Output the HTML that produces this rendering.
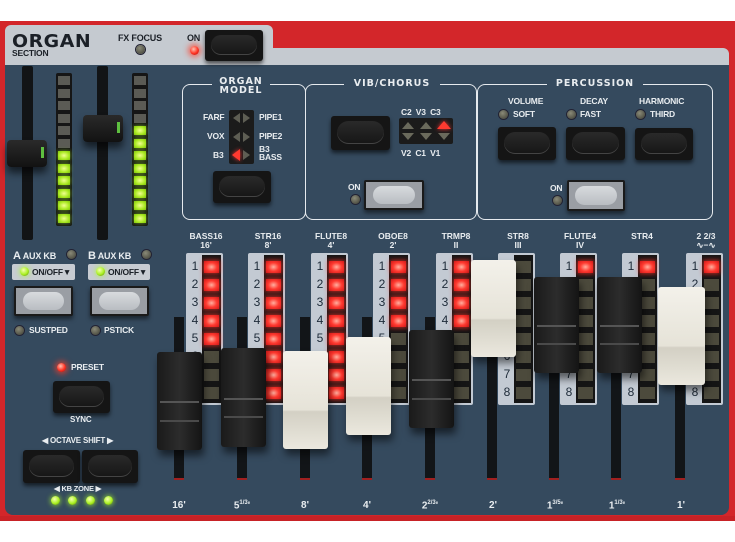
<!DOCTYPE html>
<html><head><meta charset="utf-8"><style>
*{margin:0;padding:0;box-sizing:border-box}
body{width:735px;height:542px;background:#fff;position:relative;overflow:hidden;font-family:"Liberation Sans",sans-serif;font-weight:bold;color:#e9edf0}
.a{position:absolute}
.t{position:absolute;font-size:8.5px;white-space:nowrap;letter-spacing:-0.2px}
.led{position:absolute;width:9px;height:9px;border-radius:50%;background:radial-gradient(circle at 40% 35%,#8a8a78,#3a3a30);box-shadow:0 0 0 1px #223}
.red{background:radial-gradient(circle at 40% 35%,#ffc0b0,#ff3020 55%,#a01010);box-shadow:0 0 6px 2px rgba(255,60,40,.7)}
.grn{background:radial-gradient(circle at 40% 35%,#f4ffb0,#a8f020 55%,#507010);box-shadow:0 0 5px 1px rgba(170,255,40,.6)}
.bb{position:absolute;background:#151515;border-radius:3px;box-shadow:0 3px 4px rgba(0,0,0,.6)}
.bb::after{content:"";position:absolute;left:10%;right:10%;top:15%;bottom:18%;border-radius:12px;background:linear-gradient(#2a2a2a,#161616);box-shadow:0 -1px 0 #444 inset}
.gb{position:absolute;background:#9a9ea4;border:2px solid #1a1a1a;border-radius:2px;box-shadow:0 3px 4px rgba(0,0,0,.5)}
.gb::after{content:"";position:absolute;left:12%;right:12%;top:14%;bottom:16%;border-radius:12px;background:linear-gradient(#d8dbde,#b9bdc2)}
.box{position:absolute;border:1.5px solid #e6eaee;border-radius:8px}
.title{position:absolute;background:#354a5e;padding:0 4px;font-size:9.5px;letter-spacing:1px;text-align:center;line-height:9px;font-family:"DejaVu Sans",sans-serif;font-weight:bold}
.col{position:absolute;top:253px;width:37px;height:152px;background:#c3cad3;border-radius:2px}
.nums{position:absolute;left:3px;top:4px;width:12px;font-size:12px;line-height:18px;color:#1d2a38;font-weight:normal;text-align:center}
.leds{position:absolute;left:16px;top:2px;width:19px;height:148px;background:#151515;padding:6px 2px 0;display:flex;flex-direction:column;gap:6px}
.leds i{display:block;height:12px;background:#4c4a3c}
.leds i.on{background:radial-gradient(ellipse at center,#ffb0a0,#ff3a30 50%,#d01818);box-shadow:0 0 5px 1px rgba(255,50,40,.7)}
.slot{position:absolute;width:10px;top:317px;height:163px;background:#121518;border-bottom:2px solid #a02020}
.dbk{position:absolute;width:45px;border-radius:3px;background:linear-gradient(90deg,#1a1a1a,#2c2c2c 50%,#141414);box-shadow:2px 6px 8px rgba(0,0,0,.55)}
.dbk::before{content:"";position:absolute;left:3px;right:3px;top:50%;height:2px;background:#555}
.dbk::after{content:"";position:absolute;left:3px;right:3px;top:69%;height:2px;background:#4a4a4a}
.dwh{position:absolute;width:45px;border-radius:3px;background:linear-gradient(180deg,#f3f1ea,#e6e3d8 60%,#d3d0c4 62%,#ebe8de);box-shadow:2px 6px 8px rgba(0,0,0,.5)}
.lab{position:absolute;font-size:8.5px;text-align:center;width:50px;line-height:9px}
.bl{position:absolute;top:500px;font-size:10px;width:30px;text-align:center}
.meter{position:absolute;width:16px;height:153px;background:#161616;padding:3px 2px;display:flex;flex-direction:column;gap:3.6px;border-radius:2px}
.meter i{display:block;height:9px;background:#5b5b55}
.meter i.g{background:radial-gradient(ellipse,#f0ff90,#a8e820 60%,#80c010);box-shadow:0 0 4px rgba(170,255,40,.6)}
.fs{position:absolute;width:11px;background:#121416;border-radius:2px}
.fk{position:absolute;width:40px;height:27px;border-radius:4px;background:linear-gradient(#2a2a2a,#121212);box-shadow:0 6px 8px rgba(0,0,0,.6)}
.fk::after{content:"";position:absolute;right:3px;top:7px;width:3px;height:11px;background:#5ec040}
.disp{position:absolute;background:#1b1b1b;border-radius:2px}
</style></head><body>
<!-- red frame -->
<div class="a" style="left:0;top:21px;width:735px;height:500px;background:#d3262a"></div>
<div class="a" style="left:0;top:516px;width:735px;height:5px;background:#c82226"></div>
<!-- gray header -->
<div class="a" style="left:5px;top:25px;width:268px;height:45px;background:#c5cad0;border-radius:6px 6px 0 0"></div>
<div class="a" style="left:260px;top:48px;width:469px;height:22px;background:#c5cad0;border-radius:6px 6px 0 0"></div>
<!-- blue panel -->
<div class="a" style="left:5px;top:65px;width:724px;height:450px;background:#354a5e;border-radius:0 0 8px 8px"></div>

<div class="t" style="left:12px;top:31px;font-size:18px;color:#1b2027;font-family:'DejaVu Sans',sans-serif;letter-spacing:0.5px;transform:scaleX(1.05);transform-origin:left">ORGAN</div>
<div class="t" style="left:12px;top:48px;font-size:8.5px;color:#1b2027">SECTION</div>
<div class="t" style="left:118px;top:33px;color:#1b2027;font-size:9px">FX FOCUS</div>
<div class="led" style="left:136px;top:45px"></div>
<div class="t" style="left:187px;top:33px;color:#1b2027;font-size:9px">ON</div>
<div class="led red" style="left:190px;top:46px"></div>
<div class="bb" style="left:205px;top:30px;width:58px;height:31px"></div>

<!-- faders -->
<div class="fs" style="left:22px;top:66px;height:174px"></div>
<div class="fs" style="left:97px;top:66px;height:174px"></div>
<div class="meter" style="left:56px;top:73px">
<i></i><i></i><i></i><i></i><i></i><i></i><i class="g"></i><i class="g"></i><i class="g"></i><i class="g"></i><i class="g"></i><i class="g"></i></div>
<div class="meter" style="left:132px;top:73px">
<i></i><i></i><i></i><i></i><i class="g"></i><i class="g"></i><i class="g"></i><i class="g"></i><i class="g"></i><i class="g"></i><i class="g"></i><i class="g"></i></div>
<div class="fk" style="left:7px;top:140px"></div>
<div class="fk" style="left:83px;top:115px"></div>

<!-- organ model -->
<div class="box" style="left:182px;top:84px;width:124px;height:136px"></div>
<div class="title" style="left:212px;top:77px;width:58px">ORGAN<br>MODEL</div>
<div class="t" style="left:203px;top:112px">FARF</div>
<div class="t" style="left:207px;top:131px">VOX</div>
<div class="t" style="left:213px;top:150px">B3</div>
<div class="t" style="left:259px;top:112px">PIPE1</div>
<div class="t" style="left:259px;top:131px">PIPE2</div>
<div class="t" style="left:259px;top:145px;line-height:8px">B3<br>BASS</div>
<div class="disp" style="left:229px;top:110px;width:25px;height:54px"></div>
<svg class="a" style="left:229px;top:110px" width="25" height="54">
<g fill="#5e5e54"><path d="M4 8l7-5v10z"/><path d="M21 8l-7-5v10z"/><path d="M4 27l7-5v10z"/><path d="M21 27l-7-5v10z"/><path d="M21 45l-7-5v10z"/></g>
<path d="M3 45l8-6v12z" fill="#ff3a30" style="filter:drop-shadow(0 0 2px #f33)"/></svg>
<div class="bb" style="left:213px;top:171px;width:58px;height:32px"></div>

<!-- vib chorus -->
<div class="box" style="left:305px;top:84px;width:172px;height:136px"></div>
<div class="title" style="left:344px;top:79px;width:96px">VIB/CHORUS</div>
<div class="bb" style="left:331px;top:116px;width:59px;height:34px"></div>
<div class="t" style="left:401px;top:107px">C2&nbsp; V3&nbsp; C3</div>
<div class="t" style="left:401px;top:148px">V2&nbsp; C1&nbsp; V1</div>
<div class="disp" style="left:399px;top:118px;width:54px;height:26px"></div>
<svg class="a" style="left:399px;top:118px" width="54" height="26">
<g fill="#6a6a5c"><path d="M9 4l6 7H3z"/><path d="M9 22l6-7H3z"/><path d="M27 4l6 7H21z"/><path d="M27 22l6-7H21z"/><path d="M45 22l6-7H39z"/></g>
<path d="M45 3l7 8H38z" fill="#ff3a30" style="filter:drop-shadow(0 0 2px #f33)"/></svg>
<div class="t" style="left:348px;top:182px">ON</div>
<div class="led" style="left:351px;top:195px"></div>
<div class="gb" style="left:364px;top:180px;width:60px;height:30px"></div>

<!-- percussion -->
<div class="box" style="left:477px;top:84px;width:236px;height:136px"></div>
<div class="title" style="left:547px;top:79px;width:96px">PERCUSSION</div>
<div class="t" style="left:508px;top:96px">VOLUME</div>
<div class="t" style="left:513px;top:109px">SOFT</div>
<div class="led" style="left:499px;top:110px"></div>
<div class="t" style="left:580px;top:96px">DECAY</div>
<div class="t" style="left:580px;top:109px">FAST</div>
<div class="led" style="left:567px;top:110px"></div>
<div class="t" style="left:639px;top:96px">HARMONIC</div>
<div class="t" style="left:650px;top:109px">THIRD</div>
<div class="led" style="left:636px;top:110px"></div>
<div class="bb" style="left:498px;top:127px;width:58px;height:33px"></div>
<div class="bb" style="left:566px;top:127px;width:59px;height:33px"></div>
<div class="bb" style="left:635px;top:128px;width:58px;height:32px"></div>
<div class="t" style="left:550px;top:183px">ON</div>
<div class="led" style="left:553px;top:196px"></div>
<div class="gb" style="left:567px;top:180px;width:58px;height:31px"></div>

<!-- left lower -->
<div class="t" style="left:13px;top:250px;font-size:9px"><span style="font-size:11px">A</span> AUX KB</div>
<div class="led" style="left:67px;top:250px"></div>
<div class="t" style="left:88px;top:250px;font-size:9px"><span style="font-size:11px">B</span> AUX KB</div>
<div class="led" style="left:142px;top:250px"></div>
<div class="a" style="left:12px;top:264px;width:63px;height:16px;background:#c8ccd2;border-radius:2px"></div>
<div class="led grn" style="left:20px;top:267px"></div>
<div class="t" style="left:32px;top:267px;color:#1b2027">ON/OFF▼</div>
<div class="a" style="left:88px;top:264px;width:62px;height:16px;background:#c8ccd2;border-radius:2px"></div>
<div class="led grn" style="left:96px;top:267px"></div>
<div class="t" style="left:108px;top:267px;color:#1b2027">ON/OFF▼</div>
<div class="gb" style="left:14px;top:286px;width:59px;height:30px"></div>
<div class="gb" style="left:90px;top:286px;width:59px;height:30px"></div>
<div class="led" style="left:15px;top:326px"></div>
<div class="t" style="left:29px;top:325px">SUSTPED</div>
<div class="led" style="left:91px;top:326px"></div>
<div class="t" style="left:104px;top:325px">PSTICK</div>
<div class="led red" style="left:57px;top:363px"></div>
<div class="t" style="left:71px;top:362px">PRESET</div>
<div class="bb" style="left:53px;top:381px;width:57px;height:32px"></div>
<div class="t" style="left:70px;top:415px;font-size:8px">SYNC</div>
<div class="t" style="left:42px;top:436px;font-size:8px">◀ OCTAVE SHIFT ▶</div>
<div class="bb" style="left:23px;top:450px;width:57px;height:33px"></div>
<div class="bb" style="left:82px;top:450px;width:56px;height:33px"></div>
<div class="t" style="left:54px;top:484px;font-size:7.5px">◀ KB ZONE ▶</div>
<div class="led grn" style="left:51px;top:496px"></div>
<div class="led grn" style="left:68px;top:496px"></div>
<div class="led grn" style="left:86px;top:496px"></div>
<div class="led grn" style="left:104px;top:496px"></div>

<!-- drawbar labels -->
<div class="lab" style="left:181px;top:232px">BASS16<br>16'</div>
<div class="lab" style="left:243px;top:232px">STR16<br>8'</div>
<div class="lab" style="left:306px;top:232px">FLUTE8<br>4'</div>
<div class="lab" style="left:368px;top:232px">OBOE8<br>2'</div>
<div class="lab" style="left:431px;top:232px">TRMP8<br>II</div>
<div class="lab" style="left:493px;top:232px">STR8<br>III</div>
<div class="lab" style="left:555px;top:232px">FLUTE4<br>IV</div>
<div class="lab" style="left:617px;top:232px">STR4</div>
<div class="lab" style="left:681px;top:232px">2 2/3<br>∿−∿</div>

<!-- slots -->
<div class="slot" style="left:174px"></div>
<div class="slot" style="left:237px"></div>
<div class="slot" style="left:300px"></div>
<div class="slot" style="left:362px"></div>
<div class="slot" style="left:425px"></div>
<div class="slot" style="left:487px"></div>
<div class="slot" style="left:549px"></div>
<div class="slot" style="left:611px"></div>
<div class="slot" style="left:675px"></div>

<!-- LED columns -->
<div class="col" style="left:186px"><div class="nums">1<br>2<br>3<br>4<br>5<br>6<br>7<br>8</div><div class="leds"><i class="on"></i><i class="on"></i><i class="on"></i><i class="on"></i><i class="on"></i><i></i><i></i><i></i></div></div>
<div class="col" style="left:248px"><div class="nums">1<br>2<br>3<br>4<br>5<br>6<br>7<br>8</div><div class="leds"><i class="on"></i><i class="on"></i><i class="on"></i><i class="on"></i><i class="on"></i><i class="on"></i><i class="on"></i><i class="on"></i></div></div>
<div class="col" style="left:311px"><div class="nums">1<br>2<br>3<br>4<br>5<br>6<br>7<br>8</div><div class="leds"><i class="on"></i><i class="on"></i><i class="on"></i><i class="on"></i><i class="on"></i><i class="on"></i><i class="on"></i><i class="on"></i></div></div>
<div class="col" style="left:373px"><div class="nums">1<br>2<br>3<br>4<br>5<br>6<br>7<br>8</div><div class="leds"><i class="on"></i><i class="on"></i><i class="on"></i><i class="on"></i><i></i><i></i><i></i><i></i></div></div>
<div class="col" style="left:436px"><div class="nums">1<br>2<br>3<br>4<br>5<br>6<br>7<br>8</div><div class="leds"><i class="on"></i><i class="on"></i><i class="on"></i><i class="on"></i><i></i><i></i><i></i><i></i></div></div>
<div class="col" style="left:498px"><div class="nums">1<br>2<br>3<br>4<br>5<br>6<br>7<br>8</div><div class="leds"><i></i><i></i><i></i><i></i><i></i><i></i><i></i><i></i></div></div>
<div class="col" style="left:560px"><div class="nums">1<br>2<br>3<br>4<br>5<br>6<br>7<br>8</div><div class="leds"><i class="on"></i><i></i><i></i><i></i><i></i><i></i><i></i><i></i></div></div>
<div class="col" style="left:622px"><div class="nums">1<br>2<br>3<br>4<br>5<br>6<br>7<br>8</div><div class="leds"><i class="on"></i><i></i><i></i><i></i><i></i><i></i><i></i><i></i></div></div>
<div class="col" style="left:686px"><div class="nums">1<br>2<br>3<br>4<br>5<br>6<br>7<br>8</div><div class="leds"><i class="on"></i><i></i><i></i><i></i><i></i><i></i><i></i><i></i></div></div>

<!-- handles -->
<div class="dbk" style="left:157px;top:352px;height:98px"></div>
<div class="dbk" style="left:221px;top:348px;height:99px"></div>
<div class="dwh" style="left:283px;top:351px;height:98px"></div>
<div class="dwh" style="left:346px;top:337px;height:98px"></div>
<div class="dbk" style="left:409px;top:330px;height:98px"></div>
<div class="dwh" style="left:471px;top:260px;height:97px"></div>
<div class="dbk" style="left:534px;top:277px;height:96px"></div>
<div class="dbk" style="left:597px;top:277px;height:96px"></div>
<div class="dwh" style="left:658px;top:287px;height:98px;width:47px"></div>

<!-- bottom labels -->
<div class="bl" style="left:164px">16'</div>
<div class="bl" style="left:227px">5<sup style="font-size:6px">1/3</sup>'</div>
<div class="bl" style="left:290px">8'</div>
<div class="bl" style="left:352px">4'</div>
<div class="bl" style="left:415px">2<sup style="font-size:6px">2/3</sup>'</div>
<div class="bl" style="left:478px">2'</div>
<div class="bl" style="left:540px">1<sup style="font-size:6px">3/5</sup>'</div>
<div class="bl" style="left:602px">1<sup style="font-size:6px">1/3</sup>'</div>
<div class="bl" style="left:666px">1'</div>
</body></html>
